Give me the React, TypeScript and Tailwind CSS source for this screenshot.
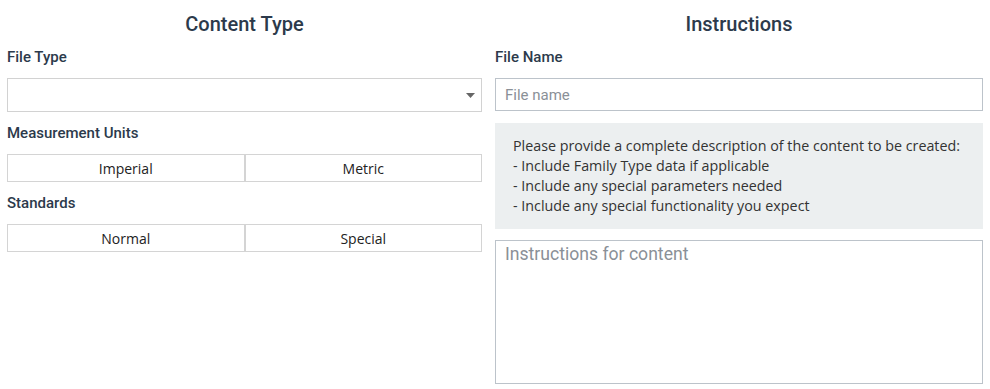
import React from 'react';

const heading = "font-['Roboto',sans-serif] text-[20px] font-medium text-[#2c3a4b] text-center leading-[22px]";
const label = "font-['Roboto',sans-serif] text-[15px] font-medium text-[#2c3a4b] leading-[18px]";
const segoe = "font-['Open_Sans',sans-serif] text-[14px] text-[#222]";

const Toggle: React.FC<{ options: string[] }> = ({ options }) => (
    <div className="flex h-[28px]">
        {options.map((o, i) => (
            <button
                key={o}
                className={`flex-1 flex items-center justify-center bg-white border border-[#d4d4d4] ${i > 0 ? 'border-l-[2px] -ml-px' : ''} ${segoe}`}
            >
                {o}
            </button>
        ))}
    </div>
);

const App: React.FC = () => {
    return (
        <div className="w-[990px] h-[389px] bg-white flex gap-[13px] px-[7px] pt-[13px]">
            <div className="w-[475px] flex flex-col">
                <h2 className={heading}>Content Type</h2>
                <div className={`${label} mt-[13px]`}>File Type</div>
                <div className="mt-[12px] h-[34px] border border-[#d2d2d2] bg-white flex items-center justify-end pr-[6px]">
                    <svg width="9" height="5" viewBox="0 0 9 5"><path d="M0 0h9L4.5 5z" fill="#666" /></svg>
                </div>
                <div className={`${label} mt-[12px]`}>Measurement Units</div>
                <div className="mt-[12px]"><Toggle options={['Imperial', 'Metric']} /></div>
                <div className={`${label} mt-[12px]`}>Standards</div>
                <div className="mt-[12px]"><Toggle options={['Normal', 'Special']} /></div>
            </div>
            <div className="w-[488px] flex flex-col">
                <h2 className={heading}>Instructions</h2>
                <div className={`${label} mt-[13px]`}>File Name</div>
                <input
                    placeholder="File name"
                    className="mt-[12px] h-[33px] border border-[#bcc3ca] px-[9px] font-['Roboto',sans-serif] text-[15px] placeholder:text-[#8a9097] outline-none"
                />
                <div className={`mt-[12px] h-[106px] bg-[#eceff0] pl-[18px] pt-[13px] leading-[20px] font-['Open_Sans',sans-serif] text-[14.3px] text-[#333]`}>
                    <div>Please provide a complete description of the content to be created:</div>
                    <div>- Include Family Type data if applicable</div>
                    <div>- Include any special parameters needed</div>
                    <div>- Include any special functionality you expect</div>
                </div>
                <textarea
                    placeholder="Instructions for content"
                    className="mt-[11px] h-[144px] resize-none border border-[#bcc3ca] px-[9px] py-0 font-['Roboto',sans-serif] text-[17.6px] leading-[26px] placeholder:text-[#8a9097] outline-none"
                />
            </div>
        </div>
    );
};

export default App;
